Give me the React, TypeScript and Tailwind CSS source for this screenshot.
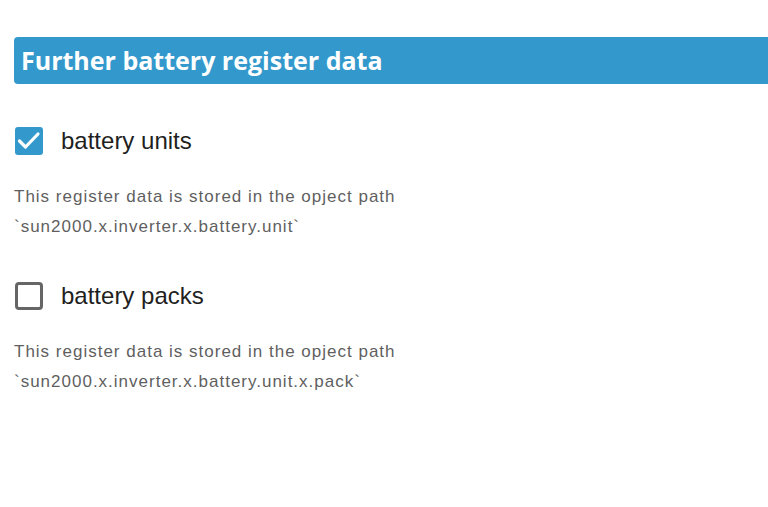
const SECTIONS = [
  { label: 'battery units', checked: true, path: '`sun2000.x.inverter.x.battery.unit`' },
  { label: 'battery packs', checked: false, path: '`sun2000.x.inverter.x.battery.unit.x.pack`' },
]

function Box({ checked }: { checked: boolean }) {
  if (checked) {
    return (
      <span className="h-[28px] w-[28px] shrink-0 rounded-[3px] bg-[#3399cc]">
        <svg viewBox="0 0 28 28" className="h-[28px] w-[28px]">
          <path d="M4.5 14 L10.5 20 L23 7" fill="none" stroke="white" strokeWidth="3.2" strokeLinecap="round" strokeLinejoin="round" />
        </svg>
      </span>
    )
  }
  return <span className="h-[28px] w-[28px] shrink-0 rounded-[4px] border-[3px] border-[#666666]" />
}

export default function App() {
  return (
    <div className="min-h-[507px] w-[768px] overflow-hidden bg-white pl-[14px] pt-[37px] font-['Liberation_Sans',Arial,sans-serif]">
      <div className="flex h-[47px] w-[780px] items-center rounded-l-[4px] bg-[#3399cc] pl-[7px]">
        <h2 className="font-['Open_Sans',sans-serif] text-[25px] font-bold text-white">Further battery register data</h2>
      </div>

      {SECTIONS.map((s, i) => (
        <div key={s.label} className={i === 0 ? 'mt-[39px]' : 'mt-[36px]'}>
          <label className="flex items-center gap-[18px] pl-[1px]">
            <Box checked={s.checked} />
            <span className="text-[24px] text-[#1f1f1f]">{s.label}</span>
          </label>
          <p className="mt-[23px] text-[17px] leading-[30px] tracking-[1px] text-[#5f5f5f]">
            This register data is stored in the opject path
            <br />
            {s.path}
          </p>
        </div>
      ))}
    </div>
  )
}
